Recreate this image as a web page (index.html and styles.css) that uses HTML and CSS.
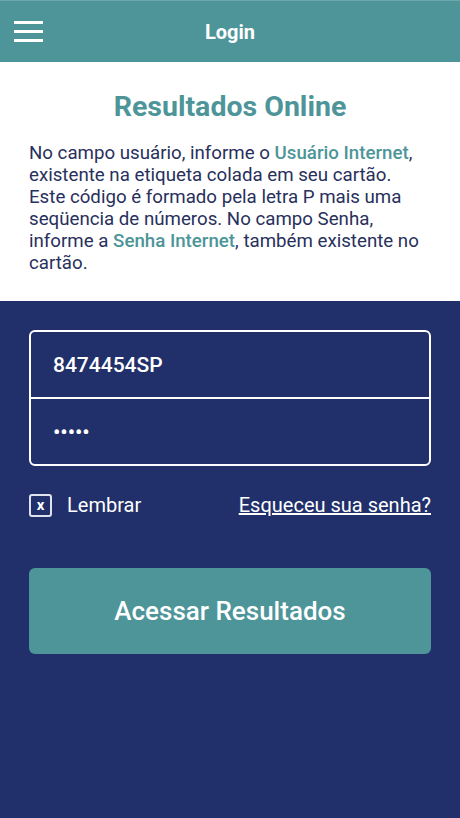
FILE: index.html
```html
<!DOCTYPE html>
<html lang="pt">
<head>
    <meta charset="UTF-8">
    <meta name="viewport" content="width=device-width, initial-scale=1.0">
    <title>Login</title>
    <link rel="stylesheet" href="styles.css">
</head>
<body>
    <header class="topbar">
        <button class="menu-btn" aria-label="Menu">
            <span></span><span></span><span></span>
        </button>
        <h1 class="topbar-title">Login</h1>
    </header>

    <section class="intro">
        <h2>Resultados Online</h2>
        <p>No campo usuário, informe o <strong>Usuário Internet</strong>, existente na etiqueta colada em seu cartão. Este código é formado pela letra P mais uma seqüencia de números. No campo Senha, informe a <strong>Senha Internet</strong>, também existente no cartão.</p>
    </section>

    <section class="login">
        <div class="fields">
            <div class="field">8474454SP</div>
            <div class="field password">•••••</div>
        </div>
        <div class="options">
            <label class="remember">
                <span class="check">x</span>
                Lembrar
            </label>
            <a href="#" class="forgot">Esqueceu sua senha?</a>
        </div>
        <button class="submit">Acessar Resultados</button>
    </section>
</body>
</html>
```

FILE: styles.css
```css
body {
    font-family: 'Roboto', 'Liberation Sans', sans-serif;
    margin: 0;
    background-color: #21306a;
    min-height: 818px;
}

.topbar {
    height: 62px;
    background-color: #4d9599;
    border-top: 1px solid #6aa8ab;
    box-sizing: border-box;
    display: flex;
    align-items: center;
    justify-content: center;
    position: relative;
}

.menu-btn {
    position: absolute;
    left: 14px;
    top: 20px;
    width: 29px;
    background: none;
    border: none;
    padding: 0;
    display: flex;
    flex-direction: column;
    gap: 6px;
}

.menu-btn span {
    display: block;
    height: 3px;
    background-color: #fff;
}

.topbar-title {
    margin: 0;
    color: #fff;
    font-size: 20px;
    font-weight: bold;
}

.intro {
    background-color: #fff;
    padding: 28px 29px 27px;
}

.intro h2 {
    margin: 0 0 18px;
    text-align: center;
    color: #4d9599;
    font-size: 28.5px;
    line-height: 34px;
    font-weight: bold;
}

.intro p {
    margin: 0;
    color: #28305c;
    font-size: 18.7px;
    line-height: 22px;
}

.intro strong {
    color: #4d9599;
    font-weight: 500;
}

.login {
    padding: 29px 29px;
}

.fields {
    border: 2px solid #fff;
    border-radius: 6px;
}

.field {
    height: 65px;
    padding: 0 22px;
    display: flex;
    align-items: center;
    color: #fff;
    font-size: 21px;
    font-weight: 500;
}

.field + .field {
    border-top: 2px solid #fff;
}

.password {
    font-size: 21px;
}

.options {
    display: flex;
    justify-content: space-between;
    align-items: center;
    margin-top: 27px;
    color: #fff;
    font-size: 20px;
    line-height: 24px;
}

.remember {
    display: flex;
    align-items: center;
    gap: 15px;
}

.check {
    width: 19px;
    height: 19px;
    border: 2px solid #dfe3ee;
    border-radius: 3px;
    display: flex;
    align-items: center;
    justify-content: center;
    font-size: 15px;
    font-weight: bold;
    line-height: 1;
}

.forgot {
    color: #fff;
    text-decoration: underline;
}

.submit {
    display: block;
    width: 100%;
    height: 86px;
    margin-top: 51px;
    background-color: #4d9599;
    border: none;
    border-radius: 6px;
    color: #fff;
    font-family: inherit;
    font-size: 26px;
    font-weight: 500;
}
```
